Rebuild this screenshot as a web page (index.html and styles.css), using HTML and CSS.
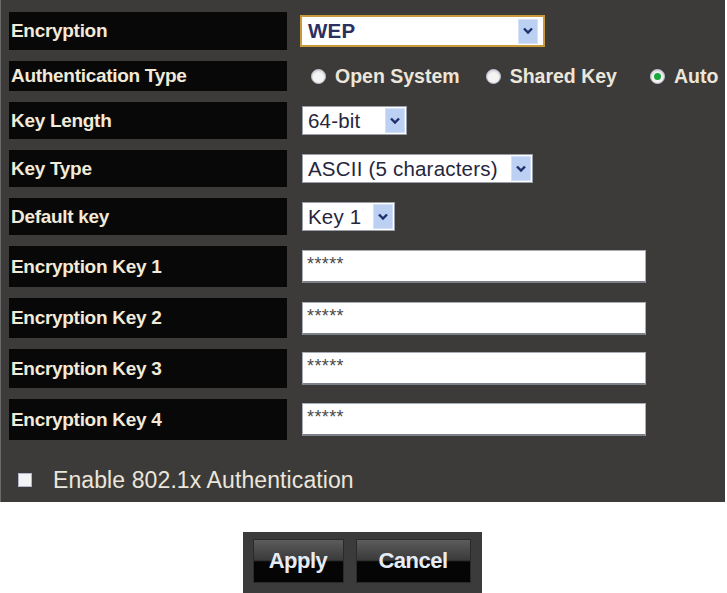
FILE: index.html
```html
<!DOCTYPE html>
<html>
<head>
<meta charset="utf-8">
<link rel="stylesheet" href="styles.css">
</head>
<body>
<div class="panel">
  <div class="rows">
    <div class="row r1">
      <div class="label">Encryption</div>
      <div class="ctl">
        <div class="select focused w-enc"><span class="val bold">WEP</span><span class="arrow"><svg width="14" height="10" viewBox="0 0 14 10"><polyline points="3,2.5 7,6.5 11,2.5" fill="none" stroke="#1e2f6e" stroke-width="2.4"/></svg></span></div>
      </div>
    </div>
    <div class="row r2">
      <div class="label">Authentication Type</div>
      <div class="ctl radios">
        <span class="opt o1"><span class="radio"></span>Open System</span>
        <span class="opt o2"><span class="radio"></span>Shared Key</span>
        <span class="opt o3"><span class="radio checked"></span>Auto</span>
      </div>
    </div>
    <div class="row r3">
      <div class="label">Key Length</div>
      <div class="ctl">
        <div class="select w-len"><span class="val">64-bit</span><span class="arrow"><svg width="14" height="10" viewBox="0 0 14 10"><polyline points="3,2.5 7,6.5 11,2.5" fill="none" stroke="#1e2f6e" stroke-width="2.4"/></svg></span></div>
      </div>
    </div>
    <div class="row r4">
      <div class="label">Key Type</div>
      <div class="ctl">
        <div class="select w-type"><span class="val">ASCII (5 characters)</span><span class="arrow"><svg width="14" height="10" viewBox="0 0 14 10"><polyline points="3,2.5 7,6.5 11,2.5" fill="none" stroke="#1e2f6e" stroke-width="2.4"/></svg></span></div>
      </div>
    </div>
    <div class="row r5">
      <div class="label">Default key</div>
      <div class="ctl">
        <div class="select w-def"><span class="val">Key 1</span><span class="arrow"><svg width="14" height="10" viewBox="0 0 14 10"><polyline points="3,2.5 7,6.5 11,2.5" fill="none" stroke="#1e2f6e" stroke-width="2.4"/></svg></span></div>
      </div>
    </div>
    <div class="row r6">
      <div class="label">Encryption Key 1</div>
      <div class="ctl"><div class="input">*****</div></div>
    </div>
    <div class="row r7">
      <div class="label">Encryption Key 2</div>
      <div class="ctl"><div class="input">*****</div></div>
    </div>
    <div class="row r8">
      <div class="label">Encryption Key 3</div>
      <div class="ctl"><div class="input">*****</div></div>
    </div>
    <div class="row r9">
      <div class="label">Encryption Key 4</div>
      <div class="ctl"><div class="input">*****</div></div>
    </div>
  </div>
  <div class="check-row">
    <span class="checkbox"></span>
    <span class="check-text">Enable 802.1x Authentication</span>
  </div>
</div>
<div class="actions">
  <div class="btnbar">
    <div class="btn apply">Apply</div>
    <div class="btn cancel">Cancel</div>
  </div>
</div>
</body>
</html>
```

FILE: styles.css
```css
* { box-sizing: border-box; }
html, body {
  margin: 0;
  padding: 0;
  background: #ffffff;
  font-family: "Liberation Sans", Arial, sans-serif;
}
.panel {
  width: 725px;
  height: 502px;
  background: #3c3b3a;
  padding: 12px 0 0 8px;
  border-left: 1px solid #6a6a6a;
}
.rows {
  display: flex;
  flex-direction: column;
  gap: 11px;
}
.row {
  display: grid;
  grid-template-columns: 278px 1fr;
  column-gap: 13px;
  align-items: center;
}
.r1 { height: 38px; }
.r2 { height: 30px; }
.r3, .r4, .r5 { height: 37px; }
.r6, .r9 { height: 41px; }
.r7 { height: 40px; }
.r8 { height: 39px; }
.label {
  height: 100%;
  background: #080808;
  color: #f2ead8;
  font-weight: bold;
  font-size: 19px;
  display: flex;
  align-items: center;
  padding-left: 2px;
  letter-spacing: -0.3px;
}
.ctl {
  display: flex;
  align-items: center;
  padding-left: 2px;
}
.select {
  height: 29px;
  background: #ffffff;
  border: 1px solid #9aa0aa;
  display: flex;
  align-items: center;
  justify-content: space-between;
  padding: 0 1px 0 5px;
  color: #26263c;
  font-size: 20.5px;
  letter-spacing: 0.2px;
}
.select.focused {
  height: 32px;
  margin-left: -2px;
  border: 2px solid #c89a3a;
  padding-left: 6px;
  padding-right: 5px;
}
.val { white-space: nowrap; }
.val.bold { font-weight: bold; color: #2c3060; }
.arrow {
  width: 20px;
  height: 25px;
  background: #bcd0f4;
  border: 1px solid #d4e0f8;
  display: flex;
  align-items: center;
  justify-content: center;
}
.w-enc { width: 245px; }
.w-len { width: 105px; }
.w-type { width: 231px; }
.w-def { width: 93px; }
.radios {
  color: #ece6da;
  font-weight: bold;
  font-size: 19.5px;
  padding-left: 11px;
}
.opt {
  display: inline-flex;
  align-items: center;
  gap: 9px;
  white-space: nowrap;
}
.o2 { margin-left: 26px; }
.o3 { margin-left: 33px; }
.radio {
  width: 15px;
  height: 15px;
  border-radius: 50%;
  background: #f4f4f4;
  border: 1px solid #b8bcc8;
  box-shadow: inset 0 1px 2px #c8c8d0;
  position: relative;
}
.radio.checked::after {
  content: "";
  position: absolute;
  left: 3px;
  top: 3px;
  width: 7px;
  height: 7px;
  border-radius: 50%;
  background: #1aa83a;
}
.input {
  width: 344px;
  height: 33px;
  background: #ffffff;
  border: 1px solid #a8acb4;
  border-bottom: 2px solid #7c8088;
  color: #4a4a4a;
  font-size: 18px;
  line-height: 26px;
  padding-left: 4px;
  letter-spacing: 0.4px;
}
.check-row {
  display: flex;
  align-items: center;
  height: 40px;
  margin-top: 20px;
  padding-left: 9px;
}
.checkbox {
  width: 14px;
  height: 14px;
  background: #f4f4f4;
  border: 1px solid #b0b8d0;
}
.check-text {
  margin-left: 21px;
  color: #ece6da;
  font-size: 23px;
  letter-spacing: 0.1px;
}
.actions {
  display: flex;
  justify-content: center;
  padding-top: 30px;
  padding-right: 3px;
}
.btnbar {
  display: flex;
  gap: 12px;
  background: #3b3b3b;
  padding: 7px 11px 10px 10px;
}
.btn {
  height: 44px;
  display: flex;
  align-items: center;
  justify-content: center;
  color: #e6ecf6;
  font-weight: bold;
  font-size: 22px;
  letter-spacing: -0.5px;
  background: linear-gradient(to bottom, #5c5c5c 0%, #3a3a3a 48%, #050505 52%, #050505 100%);
  border: 1px solid #2a2a2a;
}
.apply { width: 91px; }
.cancel { width: 115px; }
```
